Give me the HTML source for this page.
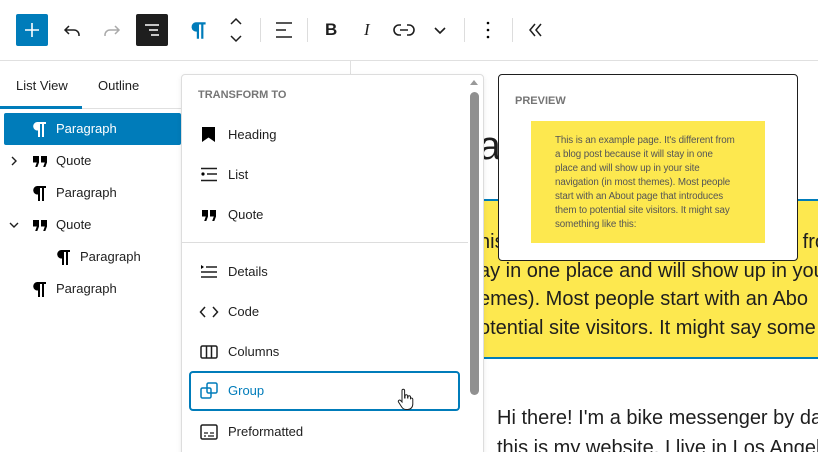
<!DOCTYPE html>
<html><head><meta charset="utf-8"><style>
*{box-sizing:border-box;margin:0;padding:0}
html,body{width:818px;height:452px;overflow:hidden}
body{background:#fff;font-family:"Liberation Sans",sans-serif;color:#1e1e1e;position:relative}
.abs{position:absolute}
.tb{left:0;top:0;width:818px;height:61px;border-bottom:1px solid #e0e0e0}
.sep{width:1px;height:24px;background:#ddd;top:18px}
svg{display:block}
.row{position:absolute;left:4px;width:177px;height:32px;font-size:13px;line-height:32px}
.row svg{position:absolute;top:6px}
.mi{position:absolute;left:189px;width:271px;height:40px;font-size:13px;line-height:40px}
.mi span{position:absolute;left:39px}
.mi svg{position:absolute;left:10px;top:10px}
</style></head><body>
<svg width="0" height="0" style="position:absolute"><defs>
<path id="pil" d="M7 3h9v2h-2v13h-2V5h-2v13H8v-6.5A4.25 4.25 0 0 1 7 3z"/>
<path id="quo" d="M3 5h6v6.5L7.3 16H5.2l1.6-4.5H3zM11 5h6v6.5L15.3 16h-2.1l1.6-4.5H11z"/>
</defs></svg>
<!-- toolbar -->
<div class="abs tb"></div>
<div class="abs" style="left:16px;top:14px;width:32px;height:32px;background:#007cba;border-radius:2px"><svg width="32" height="32"><path d="M16 9v14M9 16h14" stroke="#fff" stroke-width="1.6"/></svg></div>
<svg class="abs" style="left:60px;top:18px" width="24" height="24"><path d="M9 8L5 12l4 4M5 12h9a5 5 0 0 1 5 5v1" fill="none" stroke="#1e1e1e" stroke-width="1.5"/></svg>
<svg class="abs" style="left:100px;top:18px" width="24" height="24"><path d="M15 8l4 4-4 4M19 12h-9a5 5 0 0 0-5 5v1" fill="none" stroke="#aaa" stroke-width="1.5"/></svg>
<div class="abs" style="left:136px;top:14px;width:32px;height:32px;background:#1e1e1e;border-radius:2px"><svg width="32" height="32"><path d="M9 11h14M13 16h9M15 21h8" stroke="#fff" stroke-width="1.5"/></svg></div>
<svg class="abs" style="left:188px;top:19px;fill:#007cba" width="22" height="22" viewBox="0 0 20 20"><use href="#pil"/></svg>
<svg class="abs" style="left:226px;top:16px" width="20" height="28"><path d="M5 8l5-5 5 5M5 20l5 5 5-5" fill="none" stroke="#1e1e1e" stroke-width="1.5"/></svg>
<div class="abs sep" style="left:260px"></div>
<svg class="abs" style="left:274px;top:20px" width="20" height="20"><path d="M2 3h16M2 10h10M2 17h16" stroke="#1e1e1e" stroke-width="1.5"/></svg>
<div class="abs sep" style="left:307px"></div>
<div class="abs" style="left:325px;top:20px;font-size:17px;font-weight:bold">B</div>
<div class="abs" style="left:364px;top:20px;font-size:17px;font-style:italic;font-family:'Liberation Serif',serif">I</div>
<svg class="abs" style="left:393px;top:20px" width="22" height="20"><path d="M8 5H6a5 5 0 0 0 0 10h2M14 5h2a5 5 0 0 1 0 10h-2M7 10h8" fill="none" stroke="#1e1e1e" stroke-width="1.6"/></svg>
<svg class="abs" style="left:431px;top:22px" width="18" height="16"><path d="M4 6l5 5 5-5" fill="none" stroke="#1e1e1e" stroke-width="1.6"/></svg>
<div class="abs sep" style="left:464px"></div>
<svg class="abs" style="left:484px;top:20px" width="8" height="20"><circle cx="4" cy="3" r="1.3"/><circle cx="4" cy="10" r="1.3"/><circle cx="4" cy="17" r="1.3"/></svg>
<div class="abs sep" style="left:512px"></div>
<svg class="abs" style="left:527px;top:21px" width="18" height="18"><path d="M8 3L3 9l5 6M14 3L9 9l5 6" fill="none" stroke="#1e1e1e" stroke-width="1.5"/></svg>

<!-- sidebar -->
<div class="abs" style="left:350px;top:61px;width:1px;height:14px;background:#e0e0e0"></div>
<div class="abs" style="left:16px;top:78px;font-size:13px">List View</div>
<div class="abs" style="left:98px;top:78px;font-size:13px">Outline</div>
<div class="abs" style="left:0;top:108px;width:350px;height:1px;background:#e0e0e0"></div>
<div class="abs" style="left:0;top:106px;width:82px;height:3px;background:#007cba"></div>
<div class="row" style="top:113px;background:#007cba;color:#fff;border-radius:2px"><svg style="left:26px;fill:#fff" width="20" height="20"><use href="#pil"/></svg><span class="abs" style="left:52px">Paragraph</span></div>
<div class="row" style="top:145px"><svg style="left:6px;top:11px" width="8" height="10"><path d="M2 1l4 4-4 4" fill="none" stroke="#1e1e1e" stroke-width="1.4"/></svg><svg style="left:26px" width="20" height="20"><use href="#quo"/></svg><span class="abs" style="left:52px">Quote</span></div>
<div class="row" style="top:177px"><svg style="left:26px" width="20" height="20"><use href="#pil"/></svg><span class="abs" style="left:52px">Paragraph</span></div>
<div class="row" style="top:209px"><svg style="left:5px;top:12px" width="10" height="8"><path d="M1 2l4 4 4-4" fill="none" stroke="#1e1e1e" stroke-width="1.4"/></svg><svg style="left:26px" width="20" height="20"><use href="#quo"/></svg><span class="abs" style="left:52px">Quote</span></div>
<div class="row" style="top:241px"><svg style="left:50px" width="20" height="20"><use href="#pil"/></svg><span class="abs" style="left:76px">Paragraph</span></div>
<div class="row" style="top:273px"><svg style="left:26px" width="20" height="20"><use href="#pil"/></svg><span class="abs" style="left:52px">Paragraph</span></div>

<!-- canvas -->
<div class="abs" style="left:452px;top:124px;font-size:40px">Sa</div>
<div class="abs" style="left:483px;top:199px;width:335px;height:160px;background:#fde84f;border-top:2px solid #007cba;border-bottom:2px solid #007cba;overflow:hidden;font-size:20px;line-height:28.5px;color:#1e1e1e;white-space:nowrap">
<div style="position:absolute;left:-4px;top:27px">his is an example page. It's different fro<br>ay in one place and will show up in you<br>emes). Most people start with an Abo<br>otential site visitors. It might say some</div></div>
<div class="abs" style="left:497px;top:403px;font-size:20px;line-height:30px;white-space:nowrap">Hi there! I'm a bike messenger by day<br>this is my website. I live in Los Angele</div>

<!-- popover -->
<div class="abs" style="left:181px;top:74px;width:303px;height:390px;background:#fff;border:1px solid #ddd;border-radius:4px;box-shadow:0 2px 6px rgba(0,0,0,.08)"></div>
<div class="abs" style="left:198px;top:89px;font-size:11px;font-weight:bold;color:#757575">TRANSFORM TO</div>
<div class="abs" style="left:470px;top:80px;width:0;height:0;border-left:4px solid transparent;border-right:4px solid transparent;border-bottom:5px solid #999"></div>
<div class="abs" style="left:470px;top:92px;width:9px;height:303px;background:#909090;border-radius:5px"></div>
<div class="mi" style="top:115px"><svg width="20" height="20"><path d="M3 2h13v15l-6.5-4.5L3 17z"/></svg><span>Heading</span></div>
<div class="mi" style="top:155px"><svg width="20" height="20"><circle cx="4" cy="9" r="1.6"/><path d="M8 9h10M2 3.5h16M2 15.5h16" stroke="#1e1e1e" stroke-width="1.4"/></svg><span>List</span></div>
<div class="mi" style="top:195px"><svg width="20" height="20"><use href="#quo"/></svg><span>Quote</span></div>
<div class="abs" style="left:182px;top:242px;width:286px;height:1px;background:#ddd"></div>
<div class="mi" style="top:252px"><svg width="20" height="20"><path d="M2 3l3 2-3 2z"/><path d="M7 5h11M2 10h16M2 15h16" stroke="#1e1e1e" stroke-width="1.4"/></svg><span>Details</span></div>
<div class="mi" style="top:292px"><svg width="20" height="20"><path d="M6 5L1.5 10 6 15M14 5l4.5 5-4.5 5" fill="none" stroke="#1e1e1e" stroke-width="1.5"/></svg><span>Code</span></div>
<div class="mi" style="top:332px"><svg width="20" height="20"><rect x="2" y="4" width="16" height="12" rx="1.5" fill="none" stroke="#1e1e1e" stroke-width="1.5"/><path d="M7.5 4v12M12.5 4v12" stroke="#1e1e1e" stroke-width="1.5"/></svg><span>Columns</span></div>
<div class="mi" style="top:371px;border:2px solid #007cba;border-radius:4px;color:#007cba;line-height:36px"><svg width="20" height="20" style="left:8px;top:8px"><rect x="2" y="7" width="10" height="10" rx="1.5" fill="none" stroke="#007cba" stroke-width="1.5"/><rect x="8" y="2" width="10" height="10" rx="1.5" fill="none" stroke="#007cba" stroke-width="1.5"/></svg><span style="left:37px">Group</span></div>
<svg class="abs" style="left:396px;top:388px" width="18" height="24"><path d="M6 2.5a1.3 1.3 0 0 1 2.6 0V10h.4V8a1.3 1.3 0 0 1 2.6 0v2h.3V9a1.3 1.3 0 0 1 2.6 0v1.5a1.3 1.3 0 0 1 2.3 .8V16c0 3-2 5.5-5 5.5H10c-2 0-3.3-1-4.3-2.5L2.5 14a1.3 1.3 0 0 1 2-1.6L6 14z" fill="#fff" stroke="#1e1e1e" stroke-width="1"/></svg>
<div class="mi" style="top:412px"><svg width="20" height="20"><rect x="2" y="3" width="16" height="14" rx="1.5" fill="none" stroke="#1e1e1e" stroke-width="1.5"/><path d="M5 11h4M11 11h4M5 14h2M9 14h6" stroke="#1e1e1e" stroke-width="1.3"/></svg><span>Preformatted</span></div>

<!-- preview -->
<div class="abs" style="left:498px;top:74px;width:300px;height:187px;background:#fff;border:1px solid #1e1e1e;border-radius:4px"></div>
<div class="abs" style="left:515px;top:95px;font-size:11px;font-weight:bold;color:#757575">PREVIEW</div>
<div class="abs" style="left:531px;top:121px;width:234px;height:122px;background:#fde84f;padding:13px 0 0 24px;font-size:9.8px;line-height:14px;color:#555;white-space:nowrap;letter-spacing:-0.1px">This is an example page. It's different from<br>a blog post because it will stay in one<br>place and will show up in your site<br>navigation (in most themes). Most people<br>start with an About page that introduces<br>them to potential site visitors. It might say<br>something like this:</div>
</body></html>
